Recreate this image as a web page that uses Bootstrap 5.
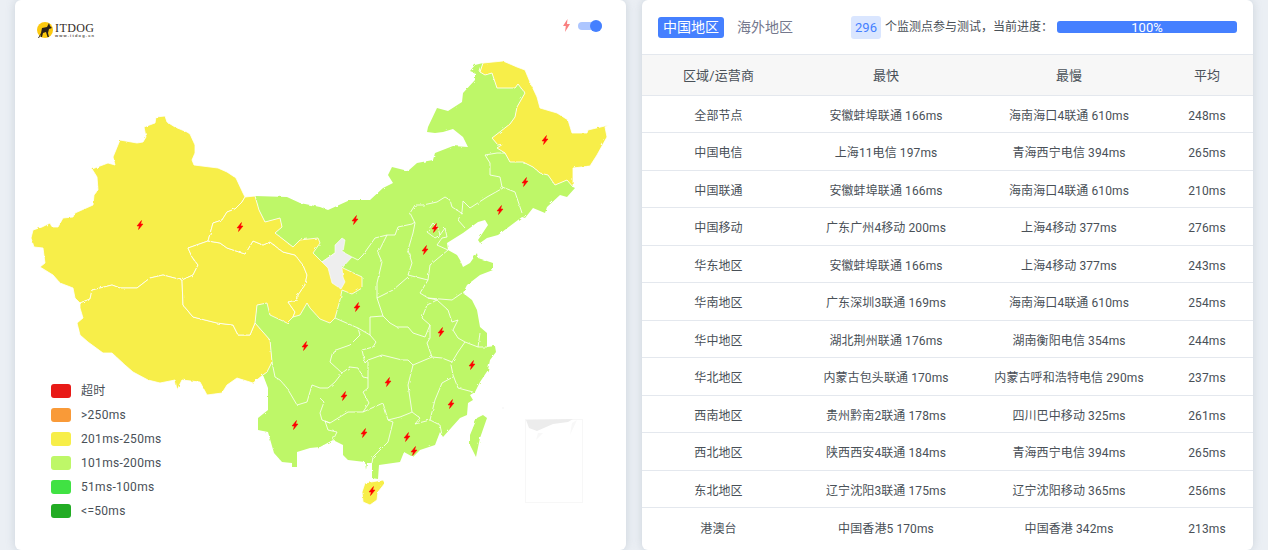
<!DOCTYPE html>
<html lang="zh-CN">
<head>
  <meta charset="UTF-8" />
  <meta name="viewport" content="width=device-width, initial-scale=1.0"/>
  <title>ITDOG 测速</title>
  <link href="https://cdn.jsdelivr.net/npm/bootstrap@5.3.0/dist/css/bootstrap.min.css" rel="stylesheet" />
  <style>
    html, body { height: 550px; overflow: hidden; }
    body {
      background: #ebeff4;
      font-family: Roboto, "Noto Sans CJK SC", sans-serif;
      color: #495057;
      font-size: 12px;
    }
    .page-wrap { padding: 0 15px; height: 550px; }
    .panel {
      width: 611px;
      height: 550px;
      background: #fff;
      border: 0;
      border-radius: 6px;
      box-shadow: 0 0 10px rgba(120, 135, 155, .28);
      overflow: hidden;
    }
    /* map side */
    .map-svg { display: block; width: 611px; height: 550px; }
    .map-switch { top: 19px; right: 24px; }
    .switch-track { width: 24px; height: 8px; border-radius: 4px; background: #adc6ff; }
    .switch-knob { width: 12px; height: 12px; border-radius: 50%; background: #4580ff; top: -2px; right: 0; }
    .map-legend { left: 36px; top: 379px; letter-spacing: .3px; }
    .legend-row { height: 24px; line-height: 24px; color: #495057; }
    .legend-swatch { width: 20px; height: 14px; border-radius: 3px; margin-right: 10px; }
    /* result side */
    .result-head { height: 55px; padding: 0 16px; border-bottom: 1px solid #e4e8ee; white-space: nowrap; }
    .tab-on, .tab-off { font-size: 14px; line-height: 21px; padding: 0 5px; border-radius: 3px; }
    .tab-on { background: #4580ff; color: #fff; }
    .tab-off { color: #74788d; margin-left: 8px; }
    .count-chip { background: #dae6ff; color: #4580ff; font-size: 13px; width: 30px; height: 23px; line-height: 23px; text-align: center; border-radius: 3px; margin-left: 53px; margin-right: 4px; }
    .load-bar { width: 180px; height: 12px; border-radius: 3px; background: #4580ff; color: #fff; font-size: 13px; line-height: 13px; margin-left: 4px; text-align: center; }
    .result-table { table-layout: fixed; width: 611px; margin: 0; color: #495057; font-size: 12px; text-align: center; letter-spacing: .1px; }
    .result-table th { background: #f7f7f7; font-weight: 400; font-size: 13px; height: 40px; padding: 1px 0 0; vertical-align: middle; border-bottom: 1px solid #e4e8ee; }
    .result-table td { height: 37.5px; padding: 4px 0 0; vertical-align: middle; border-bottom: 1px solid #e4e8ee; }
    .result-table tr:last-child td { border-bottom: 0; }
  </style>
</head>
<body>
  <div class="page-wrap d-flex gap-3">

    <!-- 地图 -->
    <div class="panel card position-relative">
      <svg class="map-svg" viewBox="15 0 611 550" xmlns="http://www.w3.org/2000/svg">
        <defs>
          <path id="bolt" d="M1.500-4.500-3 1-.7 1-1.500 4.500 3-1 .7-1Z" fill="#f00" stroke="#f00" stroke-width=".5" stroke-linejoin="round"/>
          <filter id="rough" x="0" y="0" width="100%" height="100%">
            <feTurbulence type="fractalNoise" baseFrequency=".22" numOctaves="2" seed="4" result="n"/>
            <feDisplacementMap in="SourceGraphic" in2="n" scale="2.400"/>
          </filter>
        </defs>

        <g filter="url(#rough)">
        <!-- 绿色区域 -->
        <polygon fill="#bef768" points="255,196 287,197 300,203 320,207 328,210 350,200 370,200 383,188 393,183 388,175 392,167 408,171 417,163 433,160 435,153 453,146 468,147 463,137 453,129 443,132 435,133 427,132 428,127 437,108 448,111 462,102 463,93 475,80 475,73 470,71 475,65 483,63 480,72 485,75 492,73 497,88 515,88 518,84 525,93 517,107 515,117 510,124 492,138 498,145 503,144 497,148 505,153 510,162 523,162 533,167 540,173 548,175 555,185 567,180 573,187 575,188 567,197 560,195 547,207 545,213 533,208 525,218 522,217 498,235 487,238 480,243 478,240 488,225 485,220 478,222 463,233 447,243 448,250 457,255 460,260 463,267 470,263 477,253 478,258 493,263 493,270 480,275 467,285 463,293 472,300 477,310 480,327 487,333 487,347 495,346 496,352 490,360 488,370 480,382 475,392 470,395 473,400 468,403 467,415 460,418 443,437 440,432 435,445 420,450 413,457 404,452 400,462 379,465 378,479 372,478 372,463 367,463 366,470 365,462 348,460 343,455 343,445 333,440 320,447 310,448 297,452 297,467 292,467 292,463 282,462 274,453 268,432 258,430 258,418 268,410 268,388 263,375 267,372 272,362 270,340 255,323 257,305 280,300 300,270 293,247 275,233 282,227 280,218 265,222 259,210"/>
        <polygon fill="#bef768" points="483,415 487,418 480,438 476,457 470,445 470,435 477,418"/>

        <!-- 黄色区域 -->
        <g fill="#f7ee48" stroke="#fff" stroke-width=".8" stroke-linejoin="round">
          <polygon points="156,117 165,116 167,122 175,127 187,132 190,134 195,145 195,153 192,160 194,165 218,168 227,172 236,178 243,193 245,197 242,202 235,209 227,212 222,220 213,223 208,241 188,248 192,257 198,265 193,275 182,280 163,275 150,278 137,288 120,288 112,285 92,290 90,299 80,303 75,298 73,288 60,283 53,275 40,267 45,263 43,248 34,247 31,238 33,230 42,227 50,223 52,227 58,227 63,218 73,217 75,213 93,205 94,195 98,190 97,177 92,169 108,163 115,165 113,157 120,140 137,143 143,142 146,137 144,127 155,123"/>
          <polygon points="80,303 90,299 92,290 112,285 120,288 137,288 150,278 163,275 182,280 183,305 193,317 217,323 233,325 238,335 250,335 255,323 270,340 272,362 267,372 263,375 253,383 237,378 227,385 222,393 207,395 200,382 182,380 177,390 175,380 160,383 148,380 133,372 125,365 112,353 103,353 88,342 80,335 77,323 83,318 80,308"/>
          <polygon points="188,248 208,241 220,243 227,248 245,254 253,241 263,245 270,242 283,252 295,255 303,265 307,275 305,285 298,295 298,300 288,302 295,312 293,317 287,323 270,315 267,303 257,305 255,323 250,335 238,335 233,325 217,323 193,317 183,305 182,280 193,275 198,265 192,257"/>
          <polygon points="255,196 259,210 265,222 280,218 282,227 275,233 293,247 300,240 318,238 320,243 313,253 322,262 335,253 343,268 362,277 362,288 352,294 342,290 340,300 335,318 330,323 320,319 310,308 307,303 300,315 293,317 295,312 288,302 298,300 298,295 305,285 307,275 303,265 295,255 283,252 270,242 263,245 253,241 245,254 227,248 220,243 208,241 213,223 222,220 227,212 235,209 242,202 245,197"/>
          <polygon points="483,63 503,61 517,67 525,70 530,82 537,97 540,108 557,113 568,120 572,133 587,133 588,130 609,125 605,127 607,137 597,155 590,166 573,168 573,187 567,180 555,185 548,175 540,173 533,167 523,162 510,162 505,153 497,148 503,144 498,145 492,138 510,124 515,117 517,107 525,93 518,84 515,88 497,88 492,73 485,75 480,72"/>
          <polygon points="362,492 365,483 383,480 385,483 378,492 377,500 370,505 363,502"/>
        </g>

        <!-- 宁夏 -->
        <polygon fill="#eeeeee" stroke="#fff" stroke-width=".6" points="342,238 345,240 343,252 352,257 342,268 343,277 345,282 341,289 332,283 328,268 322,262 335,253 335,245"/>

        <!-- 省界 -->
        <g fill="none" stroke="#fff" stroke-width=".8" stroke-linejoin="round">
          <polyline points="485,155 497,153 505,153"/>
          <polyline points="485,155 490,163 490,175 500,177 502,187 510,190 515,192 522,213"/>
          <polyline points="503,188 487,197 470,208 463,201 462,212 458,220 465,228"/>
          <polyline points="463,214 452,207 450,200 445,197 437,202 423,205 415,205 410,213 415,223 413,233 408,250 412,263 408,275 428,280 420,293 428,298 437,300 427,305 422,318 430,325 425,337 413,333 408,327 397,327 390,323 383,316 370,317"/>
          <polygon points="433,223 427,232 435,238 440,235 438,228"/>
          <polyline points="440,235 445,228 447,237 442,238 437,245 448,250 430,265 428,280"/>
          <polyline points="415,222 412,224 398,227 395,235 387,235 375,238 363,255 358,260 352,257"/>
          <polyline points="387,235 378,253 382,262 377,283 377,298 383,316"/>
          <polyline points="377,298 393,290 408,277"/>
          <polyline points="428,298 452,300 462,293"/>
          <polyline points="437,300 448,310 452,322 458,320 453,330 458,338 465,342 478,347 487,347"/>
          <polyline points="480,333 478,347"/>
          <polyline points="430,325 430,338 427,343 432,357 442,358 452,362 458,352 465,342"/>
          <polyline points="452,362 451,365 453,375 458,388 473,392"/>
          <polyline points="453,377 442,383 435,400 430,420 440,425 442,435"/>
          <polyline points="432,357 413,365 408,385 412,412 420,418 415,424 430,420"/>
          <polyline points="413,365 408,360 402,360 382,355 368,360 368,388 363,392 369,403 363,412 348,412 330,423 322,420"/>
          <polyline points="370,317 370,335 376,342 373,347 362,350 365,363 368,360"/>
          <polyline points="335,318 358,328 370,335"/>
          <polyline points="358,328 360,335 350,345 333,351 330,362 342,373 350,367 358,368 363,377 368,378"/>
          <polyline points="363,412 383,403 388,420 400,417 410,413 412,412"/>
          <polyline points="393,422 388,442 373,457 372,463"/>
          <polyline points="388,420 393,422"/>
          <polyline points="330,423 325,421 328,430 337,432 333,440"/>
          <polyline points="342,373 335,382 328,388 320,388 312,385 307,402 297,405 287,388 280,380 275,377 273,367 272,362"/>
          <polyline points="320,398 324,402 320,413 322,420"/>
        </g>
        </g>

        <!-- 南海小图 -->
        <rect x="525.500" y="419.500" width="57" height="83" fill="#fff" stroke="#f7f7f7"/>
        <polygon fill="#ececec" points="526,420 573,419 568,422 553,424 537,431 529,428"/>
        <polygon fill="#f8f8f8" points="538,433 543,433 536,440"/>
        <polygon fill="#f8f8f8" points="572,423 577,420 570,435"/>
        <circle cx="503" cy="408" r=".7" fill="#eee"/>

        <!-- 节点 -->
        <use href="#bolt" x="140" y="225"/><use href="#bolt" x="240" y="227"/><use href="#bolt" x="355" y="220"/>
        <use href="#bolt" x="545" y="140"/><use href="#bolt" x="525" y="182"/><use href="#bolt" x="500" y="210"/>
        <use href="#bolt" x="435" y="228"/><use href="#bolt" x="425" y="250"/><use href="#bolt" x="357" y="307"/>
        <use href="#bolt" x="305" y="346"/><use href="#bolt" x="441" y="332"/><use href="#bolt" x="472" y="365"/>
        <use href="#bolt" x="388" y="382"/><use href="#bolt" x="344" y="396"/><use href="#bolt" x="451" y="404"/>
        <use href="#bolt" x="295" y="425"/><use href="#bolt" x="364" y="433"/><use href="#bolt" x="407" y="437"/>
        <use href="#bolt" x="414" y="451"/><use href="#bolt" x="372" y="491"/>

        <!-- logo -->
        <circle cx="45" cy="30" r="8" fill="#fcc90f"/>
        <path d="M38 38 41 33 42 28 47 27 49 23 50 26 52 28 49 29 48 33 49 37 47.500 37 46 32 43 33 42 37 40.500 37 41 34 39 38Z" fill="#2a2118"/>
        <text x="55" y="32" font-family="Liberation Serif, serif" font-size="12" fill="#332b26" textLength="39">ITDOG</text>
        <text x="55" y="37" font-family="Liberation Sans, sans-serif" font-size="4" font-weight="700" fill="#554d48" textLength="39">www.itdog.cn</text>
      </svg>

      <div class="map-switch position-absolute d-flex align-items-center">
        <svg width="7" height="13" viewBox="0 0 7 13" class="me-2"><path d="M4.500 0 0 7 2.800 7 2 13 7 5 4 5Z" fill="#f98080"/></svg>
        <span class="switch-track d-block position-relative"><span class="switch-knob d-block position-absolute"></span></span>
      </div>

      <div class="map-legend position-absolute">
        <div class="legend-row d-flex align-items-center"><span class="legend-swatch" style="background:#e81a17"></span>超时</div>
        <div class="legend-row d-flex align-items-center"><span class="legend-swatch" style="background:#f99a38"></span>&gt;250ms</div>
        <div class="legend-row d-flex align-items-center"><span class="legend-swatch" style="background:#f7ee48"></span>201ms-250ms</div>
        <div class="legend-row d-flex align-items-center"><span class="legend-swatch" style="background:#bef768"></span>101ms-200ms</div>
        <div class="legend-row d-flex align-items-center"><span class="legend-swatch" style="background:#40e243"></span>51ms-100ms</div>
        <div class="legend-row d-flex align-items-center"><span class="legend-swatch" style="background:#22ac24"></span>&lt;=50ms</div>
      </div>
    </div>

    <!-- 结果表 -->
    <div class="panel card">
      <div class="result-head d-flex align-items-center">
        <span class="tab-on">中国地区</span>
        <span class="tab-off">海外地区</span>
        <span class="count-chip">296</span>
        <span>个监测点参与测试，当前进度：</span>
        <div class="load-bar">100%</div>
      </div>
      <table class="table result-table">
        <colgroup><col style="width:153px"><col style="width:182px"><col style="width:184px"><col style="width:92px"></colgroup>
        <thead>
          <tr><th>区域/运营商</th><th>最快</th><th>最慢</th><th>平均</th></tr>
        </thead>
        <tbody>
          <tr><td>全部节点</td><td>安徽蚌埠联通 166ms</td><td>海南海口4联通 610ms</td><td>248ms</td></tr>
          <tr><td>中国电信</td><td>上海11电信 197ms</td><td>青海西宁电信 394ms</td><td>265ms</td></tr>
          <tr><td>中国联通</td><td>安徽蚌埠联通 166ms</td><td>海南海口4联通 610ms</td><td>210ms</td></tr>
          <tr><td>中国移动</td><td>广东广州4移动 200ms</td><td>上海4移动 377ms</td><td>276ms</td></tr>
          <tr><td>华东地区</td><td>安徽蚌埠联通 166ms</td><td>上海4移动 377ms</td><td>243ms</td></tr>
          <tr><td>华南地区</td><td>广东深圳3联通 169ms</td><td>海南海口4联通 610ms</td><td>254ms</td></tr>
          <tr><td>华中地区</td><td>湖北荆州联通 176ms</td><td>湖南衡阳电信 354ms</td><td>244ms</td></tr>
          <tr><td>华北地区</td><td>内蒙古包头联通 170ms</td><td>内蒙古呼和浩特电信 290ms</td><td>237ms</td></tr>
          <tr><td>西南地区</td><td>贵州黔南2联通 178ms</td><td>四川巴中移动 325ms</td><td>261ms</td></tr>
          <tr><td>西北地区</td><td>陕西西安4联通 184ms</td><td>青海西宁电信 394ms</td><td>265ms</td></tr>
          <tr><td>东北地区</td><td>辽宁沈阳3联通 175ms</td><td>辽宁沈阳移动 365ms</td><td>256ms</td></tr>
          <tr><td>港澳台</td><td>中国香港5 170ms</td><td>中国香港 342ms</td><td>213ms</td></tr>
        </tbody>
      </table>
    </div>

  </div>
  <script src="https://cdn.jsdelivr.net/npm/bootstrap@5.3.0/dist/js/bootstrap.bundle.min.js"></script>
</body>
</html>
